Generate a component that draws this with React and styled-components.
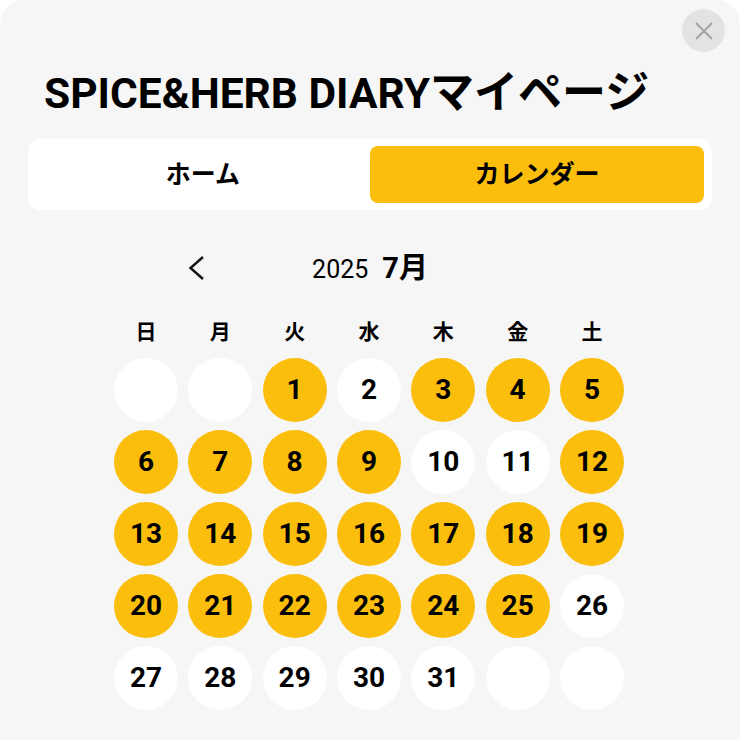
import React from 'react'
import styled, { createGlobalStyle } from 'styled-components'

const weekdays = ['日', '月', '火', '水', '木', '金', '土']
const doneDays = [1, 3, 4, 5, 6, 7, 8, 9, 12, 13, 14, 15, 16, 17, 18, 19, 20, 21, 22, 23, 24, 25]
// July 2025 starts on a Tuesday
const cells = [null, null, ...Array.from({ length: 31 }, (_, i) => i + 1), null, null]

const App = () => {
  return (
    <>
      <GlobalStyle />
      <Panel>
        <CloseRow>
          <CloseButton aria-label="閉じる">
            <svg width="20" height="20" viewBox="0 0 20 20" fill="none" stroke="#a3a3a3" strokeWidth="2">
              <path d="M2 2L18 18M18 2L2 18" />
            </svg>
          </CloseButton>
        </CloseRow>
        <Title>SPICE&amp;HERB DIARY<Kana>マイページ</Kana></Title>
        <Tabs>
          <Tab>ホーム</Tab>
          <Tab $active>カレンダー</Tab>
        </Tabs>
        <Calendar>
          <MonthNav>
            <PrevButton aria-label="前の月">
              <svg width="18" height="26" viewBox="0 0 18 26" fill="none" stroke="#111" strokeWidth="2.4">
                <path d="M16 2L3.5 13L16 24" />
              </svg>
            </PrevButton>
            <MonthLabel>
              <Year>2025</Year>
              <Month>7月</Month>
            </MonthLabel>
          </MonthNav>
          <Grid>
            {weekdays.map((w) => (
              <Weekday key={w}>{w}</Weekday>
            ))}
            {cells.map((day, i) => (
              <Day key={i} $done={doneDays.includes(day)}>
                {day}
              </Day>
            ))}
          </Grid>
        </Calendar>
      </Panel>
    </>
  )
}

export default App

const GlobalStyle = createGlobalStyle`
  html, body {
    margin: 0;
    padding: 0;
    background: #fff;
  }
  body {
    font-family: Roboto, "Noto Sans CJK JP", sans-serif;
    color: #000;
  }
`
const Panel = styled.div`
  width: 740px;
  height: 740px;
  box-sizing: border-box;
  background-color: #f6f6f6;
  border-radius: 24px 24px 0 0;
  padding: 9px 28px 0;
  overflow: hidden;
`
const CloseRow = styled.div`
  display: flex;
  justify-content: flex-end;
  margin-right: -13px;
`
const CloseButton = styled.button`
  width: 43px;
  height: 43px;
  border: none;
  padding: 0;
  border-radius: 50%;
  background-color: #e3e3e3;
  display: flex;
  align-items: center;
  justify-content: center;
`
const Title = styled.h1`
  margin: 16px 0 0 16px;
  font-size: 42.5px;
  line-height: 50px;
  font-weight: 700;
  white-space: nowrap;
`
const Kana = styled.span`
  font-size: 44px;
`
const Tabs = styled.div`
  display: grid;
  grid-template-columns: 1fr 1fr;
  margin-top: 20px;
  height: 71px;
  box-sizing: border-box;
  padding: 7px 8px;
  background-color: #fff;
  border-radius: 12px;
`
const Tab = styled.div`
  display: flex;
  align-items: center;
  justify-content: center;
  box-sizing: border-box;
  padding-bottom: 5px;
  font-size: 25px;
  font-weight: 700;
  border-radius: 8px;
  background-color: ${(props) => (props.$active ? '#fbbe0c' : 'transparent')};
`
const Calendar = styled.div`
  width: 510px;
  margin: 33px 0 0 86px;
`
const MonthNav = styled.div`
  position: relative;
  display: flex;
  justify-content: center;
  height: 44px;
  align-items: center;
`
const PrevButton = styled.div`
  position: absolute;
  left: 73px;
  top: 12px;
  display: flex;
`
const MonthLabel = styled.div`
  display: flex;
  align-items: baseline;
  gap: 14px;
  padding-left: 2px;
`
const Year = styled.span`
  font-size: 25px;
  font-weight: 400;
`
const Month = styled.span`
  font-size: 29px;
  font-weight: 700;
`
const Grid = styled.div`
  display: grid;
  grid-template-columns: repeat(7, 64px);
  grid-template-rows: 40px;
  grid-auto-rows: 64px;
  justify-content: space-between;
  row-gap: 8px;
  margin-top: 23px;
`
const Weekday = styled.div`
  display: flex;
  align-items: center;
  justify-content: center;
  font-size: 21px;
  font-weight: 700;
`
const Day = styled.div`
  display: flex;
  align-items: center;
  justify-content: center;
  box-sizing: border-box;
  padding-bottom: 1px;
  border-radius: 50%;
  font-size: 28px;
  font-weight: 700;
  background-color: ${(props) => (props.$done ? '#fbbe0c' : '#fff')};
`
